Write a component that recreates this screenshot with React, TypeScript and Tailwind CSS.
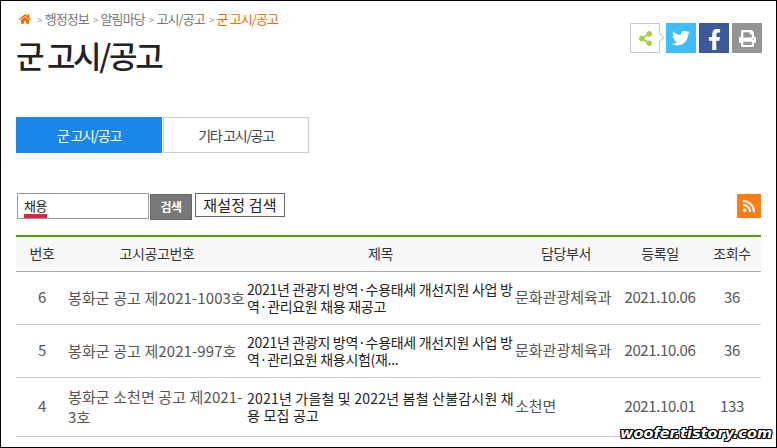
import { FaFacebookF, FaHome, FaPrint, FaRss, FaShareAlt, FaTwitter } from "react-icons/fa";

const rows = [
  {
    no: "6",
    code: "봉화군 공고 제2021-1003호",
    title: "2021년 관광지 방역·수용태세 개선지원 사업 방\n역·관리요원 채용 재공고",
    titleTracking: "tracking-[-0.3px]",
    dept: "문화관광체육과",
    date: "2021.10.06",
    hits: "36",
    height: "h-[53px]",
  },
  {
    no: "5",
    code: "봉화군 공고 제2021-997호",
    title: "2021년 관광지 방역·수용태세 개선지원 사업 방\n역·관리요원 채용시험(재...",
    titleTracking: "tracking-[-0.3px]",
    dept: "문화관광체육과",
    date: "2021.10.06",
    hits: "36",
    height: "h-[53px]",
  },
  {
    no: "4",
    code: "봉화군 소천면 공고 제2021-3호",
    title: "2021년 가을철 및 2022년 봄철 산불감시원 채\n용 모집 공고",
    titleTracking: "tracking-[0.2px]",
    dept: "소천면",
    date: "2021.10.01",
    hits: "133",
    height: "h-[59px]",
  },
];

const crumbs = ["행정정보", "알림마당", "고시/공고"];

const App = () => {
  return (
    <div className="relative h-[448px] w-[777px] overflow-hidden border border-black bg-white font-['Noto_Sans_CJK_KR','Noto_Sans',sans-serif] text-[#333]">
      <div className="flex items-start justify-between pl-[15px] pr-[14px]">
        <div>
          <div className="flex h-[35px] items-center pl-[3px] pt-[1px] text-[13px] tracking-[-0.9px] text-[#777]">
            <FaHome className="mr-[6px] text-[12px] text-[#f26a00]" />
            {crumbs.map((c) => (
              <span key={c} className="flex items-center">
                <span className="mr-[3px] text-[10px] text-[#999]">&gt;</span>
                <span className="mr-[4px]">{c}</span>
              </span>
            ))}
            <span className="mr-[3px] text-[10px] text-[#999]">&gt;</span>
            <span className="text-[#f26a00]">군 고시/공고</span>
          </div>
          <h1 className="-mt-[2px] text-[31px] font-medium leading-[42px] tracking-[-2.3px] text-[#222]">군 고시/공고</h1>
        </div>
        <div className="flex pt-[22px]">
          <div className="relative mr-[6px] flex h-[30px] w-[30px] items-center justify-center border border-[#c8c8c8] bg-white text-[15px] text-[#a4cf3e]">
            <FaShareAlt />
            <span className="absolute right-[-4px] top-[10px] h-[7px] w-[7px] rotate-45 border-r border-t border-[#c8c8c8] bg-white" />
          </div>
          <div className="mr-[3px] flex h-[30px] w-[30px] items-center justify-center bg-[#3dbdfb] text-[18px] text-white">
            <FaTwitter />
          </div>
          <div className="mr-[3px] flex h-[30px] w-[30px] items-center justify-center bg-[#3b5998] pt-[3px] text-[21px] text-white">
            <FaFacebookF />
          </div>
          <div className="flex h-[30px] w-[30px] items-center justify-center bg-[#959595] text-[17px] text-white">
            <FaPrint />
          </div>
        </div>
      </div>

      <div className="mt-[41px] flex pl-[15px]">
        <div className="flex h-[36px] w-[146px] items-center justify-center bg-[#1a86e8] text-[14px] tracking-[-1.3px] text-white">
          군 고시/공고
        </div>
        <div className="ml-[1px] flex h-[36px] w-[146px] items-center justify-center border border-[#ccc] text-[14px] tracking-[-1.3px] text-[#444]">
          기타 고시/공고
        </div>
      </div>

      <div className="mt-[40px] flex items-start justify-between pl-[16px] pr-[15px]">
        <div className="flex items-start">
          <div className="relative h-[26px] w-[132px] border border-[#999] pl-[6px] text-[13px] leading-[24px] tracking-[-0.5px] text-[#222]">
            채용
            <span className="absolute bottom-[0px] left-[6px] h-[4px] w-[23px] bg-[#dc2648]" />
          </div>
          <div className="ml-[1px] mt-[1px] flex h-[26px] w-[42px] items-center justify-center border border-[#666] bg-[#777] text-[12px] font-bold tracking-[-0.5px] text-white">
            검색
          </div>
          <div className="ml-[3px] flex h-[24px] w-[90px] items-center justify-center border border-[#666] text-[15px] tracking-[0.2px] text-[#222]">
            재설정 검색
          </div>
        </div>
        <div className="mt-[1px] flex h-[24px] w-[24px] items-center justify-center bg-[#fd7e14] text-[14px] text-white">
          <FaRss />
        </div>
      </div>

      <table className="ml-[15px] mt-[15px] w-[745px] table-fixed border-t-[2px] border-[#4ba600] text-[15px] tracking-[-0.4px]">
        <colgroup>
          <col className="w-[52px]" />
          <col className="w-[178px]" />
          <col className="w-[269px]" />
          <col className="w-[102px]" />
          <col className="w-[86px]" />
          <col className="w-[58px]" />
        </colgroup>
        <thead>
          <tr className="h-[35px] border-b border-[#aaa] bg-[#f8f8f8] text-[14px] text-[#333]">
            <th className="font-normal">번호</th>
            <th className="font-normal">고시공고번호</th>
            <th className="font-normal">제목</th>
            <th className="font-normal">담당부서</th>
            <th className="font-normal">등록일</th>
            <th className="font-normal">조회수</th>
          </tr>
        </thead>
        <tbody>
          {rows.map((r) => (
            <tr key={r.no} className={`${r.height} border-b border-[#ccc] text-[#555]`}>
              <td className="text-center">{r.no}</td>
              <td className="leading-[20px] tracking-[0.1px]">{r.code}</td>
              <td className={`${r.titleTracking} whitespace-pre pl-[1px] text-[14px] leading-[17px] text-[#222]`}>{r.title}</td>
              <td className="tracking-[0px]">{r.dept}</td>
              <td className="text-center">{r.date}</td>
              <td className="text-center">{r.hits}</td>
            </tr>
          ))}
        </tbody>
      </table>

      <div className="absolute bottom-[2px] right-[4px] font-['DejaVu_Sans',sans-serif] text-[14.5px] font-bold italic text-white [text-shadow:1px_0_0_#000,-1px_0_0_#000,0_1px_0_#000,0_-1px_0_#000,1px_1px_0_#000,-1px_-1px_0_#000,1px_-1px_0_#000,-1px_1px_0_#000]">
        woofer.tistory.com
      </div>
    </div>
  );
};

export default App;
